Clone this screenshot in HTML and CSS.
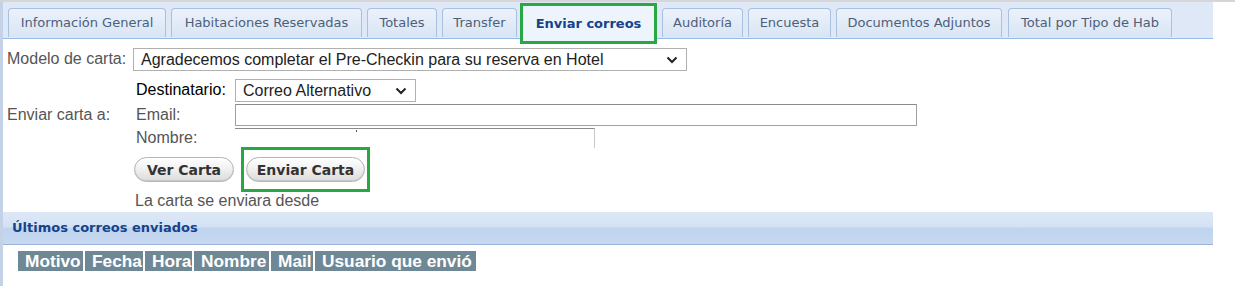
FILE: index.html
```html
<!DOCTYPE html>
<html lang="es">
  <head>
    <meta charset="UTF-8" />
    <title>Enviar correos</title>
    <link rel="stylesheet" href="styles.css">
  </head>
  <body>
    <div class="topline"></div>
    <div id="panel">
      <div class="tabs">
        <div class="tab t-info">Información General</div>
        <div class="tab t-hab">Habitaciones Reservadas</div>
        <div class="tab t-tot">Totales</div>
        <div class="tab t-tra">Transfer</div>
        <div class="tab active">Enviar correos</div>
        <div class="tab t-aud">Auditoría</div>
        <div class="tab t-enc">Encuesta</div>
        <div class="tab t-doc">Documentos Adjuntos</div>
        <div class="tab t-tipo">Total por Tipo de Hab</div>
      </div>

      <div class="form">
        <label class="lbl">Modelo de carta:</label>
        <span class="sel-wrap sel-model">
          <select class="sel">
            <option>Agradecemos completar el Pre-Checkin para su reserva en Hotel</option>
          </select>
          <svg class="chev" width="12" height="8" viewBox="0 0 12 8"><path d="M1.5 1.5 L6 6 L10.5 1.5" fill="none" stroke="#222" stroke-width="2"/></svg>
        </span>

        <label class="lbl-in dark">Destinatario:</label>
        <span class="sel-wrap sel-dest">
          <select class="sel">
            <option>Correo Alternativo</option>
          </select>
          <svg class="chev" width="12" height="8" viewBox="0 0 12 8"><path d="M1.5 1.5 L6 6 L10.5 1.5" fill="none" stroke="#222" stroke-width="2"/></svg>
        </span>

        <label class="lbl">Enviar carta a:</label>
        <label class="lbl-in">Email:</label>
        <input type="text" class="inp inp-mail" />

        <label class="lbl-in short">Nombre:</label>
        <div class="inp-name"><span class="tick"></span></div>

        <div class="buttons">
          <button class="pill">Ver Carta</button>
          <span class="mark"><button class="pill">Enviar Carta</button></span>
        </div>

        <div class="note">La carta se enviara desde</div>
      </div>

      <div class="header">Últimos correos enviados</div>

      <table class="sent">
        <tr>
          <th class="c-mot">Motivo</th>
          <th class="c-fec">Fecha</th>
          <th class="c-hor">Hora</th>
          <th class="c-nom">Nombre</th>
          <th class="c-mail">Mail</th>
          <th class="c-usr">Usuario que envió</th>
        </tr>
      </table>
    </div>
  </body>
</html>
```

FILE: styles.css
```css
body {
  margin: 0;
  background: #fff;
  font-family: "Liberation Sans", Arial, sans-serif;
}
.topline {
  height: 2px;
  background: #d6d6d6;
}
#panel {
  width: 1210px;
  height: 284px;
  border-left: 3px solid #c3d2e6;
}
.tabs {
  display: flex;
  gap: 5px;
  padding: 5px 0 0 5px;
  box-sizing: border-box;
  background: #dfe8f6;
  border-bottom: 1px solid #99bbe8;
  height: 37px;
}
.tab {
  height: 29px;
  margin-top: 1px;
  padding: 0;
  box-sizing: border-box;
  text-align: center;
  white-space: nowrap;
  line-height: 27px;
  font-family: "DejaVu Sans", sans-serif;
  font-size: 13px;
  color: #4d607a;
  background: linear-gradient(#ecf2fb, #d9e5f4);
  border: 1px solid #a9c0df;
  border-bottom: none;
  border-radius: 4px 4px 0 0;
}
.t-info { width: 158px; }
.t-hab { width: 191px; }
.t-tot { width: 70px; }
.t-tra { width: 75px; margin-right: -2px; }
.t-aud { width: 81px; }
.t-enc { width: 83px; }
.t-doc { width: 166px; margin-right: 1px; }
.t-tipo { width: 164px; }
.tab.active {
  width: 137px;
  font-weight: bold;
  color: #15428b;
  background: #eef4fc;
  border: 3px solid #27a844;
  border-radius: 0;
  height: 41px;
  margin-top: -4px;
  padding-top: 3px;
  line-height: 29px;
}
.form {
  display: grid;
  grid-template-columns: 126px 102px 1fr;
  grid-auto-rows: min-content;
  padding: 9px 0 0 4px;
  font-size: 16px;
  color: #555;
}
.lbl {
  grid-column: 1;
  line-height: 22px;
}
.lbl-in {
  grid-column: 2;
  padding-left: 3px;
  line-height: 22px;
}
.lbl-in.short {
  line-height: 20px;
}
.dark {
  color: #000;
}
.sel-wrap {
  position: relative;
  display: block;
  height: 23px;
}
.sel {
  appearance: none;
  width: 100%;
  font-family: "Liberation Sans", Arial, sans-serif;
  font-size: 16px;
  color: #222;
  height: 23px;
  border: 1px solid #b0b0b0;
  border-radius: 0;
  background: #fff;
  padding: 0 0 0 7px;
}
.chev {
  position: absolute;
  right: 9px;
  top: 8px;
}
.sel-model {
  grid-column: 2 / 4;
  width: 554px;
  margin-bottom: 8px;
}
.sel-dest {
  grid-column: 3;
  width: 181px;
  margin-bottom: 2px;
}
.inp {
  height: 22px;
  box-sizing: border-box;
  border: 1px solid #a0a0a0;
  border-top-color: #8a8a8a;
  padding: 0;
}
.inp-mail {
  grid-column: 3;
  width: 682px;
  margin-bottom: 2px;
}
.lbl-in + .inp-name {
  grid-column: 3;
}
.inp-name {
  position: relative;
  width: 360px;
  height: 20px;
  box-sizing: border-box;
  border-top: 1px solid #8a8a8a;
  border-right: 1px solid #c8c8c8;
}
.tick {
  position: absolute;
  left: 121px;
  top: 1px;
  width: 1px;
  height: 2px;
  background: #555;
}
.buttons {
  grid-column: 2 / 4;
  display: flex;
  align-items: center;
  gap: 7px;
  margin-top: -1px;
}
.pill {
  font-family: "DejaVu Sans", sans-serif;
  font-weight: bold;
  font-size: 14px;
  color: #333;
  height: 25px;
  padding: 0;
  border: 1px solid #b5b5b5;
  border-radius: 13px;
  background: linear-gradient(#ffffff 0%, #f1f1f1 45%, #dcdcdc 100%);
  box-shadow: inset 0 -1px 1px #c8c8c8;
}
.buttons > .pill {
  width: 100px;
  margin-left: 1px;
}
.mark {
  display: inline-block;
  padding: 7px 2px;
  border: 3px solid #27a844;
}
.mark .pill {
  display: block;
  width: 119px;
}
.note {
  grid-column: 2 / 4;
  padding: 0 0 0 2px;
  line-height: 18px;
}
.header {
  margin-top: 2px;
  height: 33px;
  box-sizing: border-box;
  padding-left: 9px;
  line-height: 32px;
  font-family: "DejaVu Sans", sans-serif;
  font-weight: bold;
  font-size: 13px;
  color: #15428b;
  background: linear-gradient(#dde8f6 0%, #d4e2f4 45%, #c0d4ee 52%, #c7d8f0 100%);
  border-bottom: 1px solid #99b4d8;
}
.sent {
  margin: 4px 0 0 13px;
  border-spacing: 2px;
}
.sent th {
  box-sizing: border-box;
  background: #6f8895;
  color: #fff;
  font-size: 17.3px;
  font-weight: bold;
  height: 20px;
  padding: 0 0 0 7px;
  text-align: left;
  white-space: nowrap;
  line-height: 20px;
}
.c-mot { width: 65px; }
.c-fec { width: 58px; }
.c-hor { width: 47px; }
.c-nom { width: 75px; }
.c-mail { width: 42px; }
.c-usr { width: 161px; }
```
